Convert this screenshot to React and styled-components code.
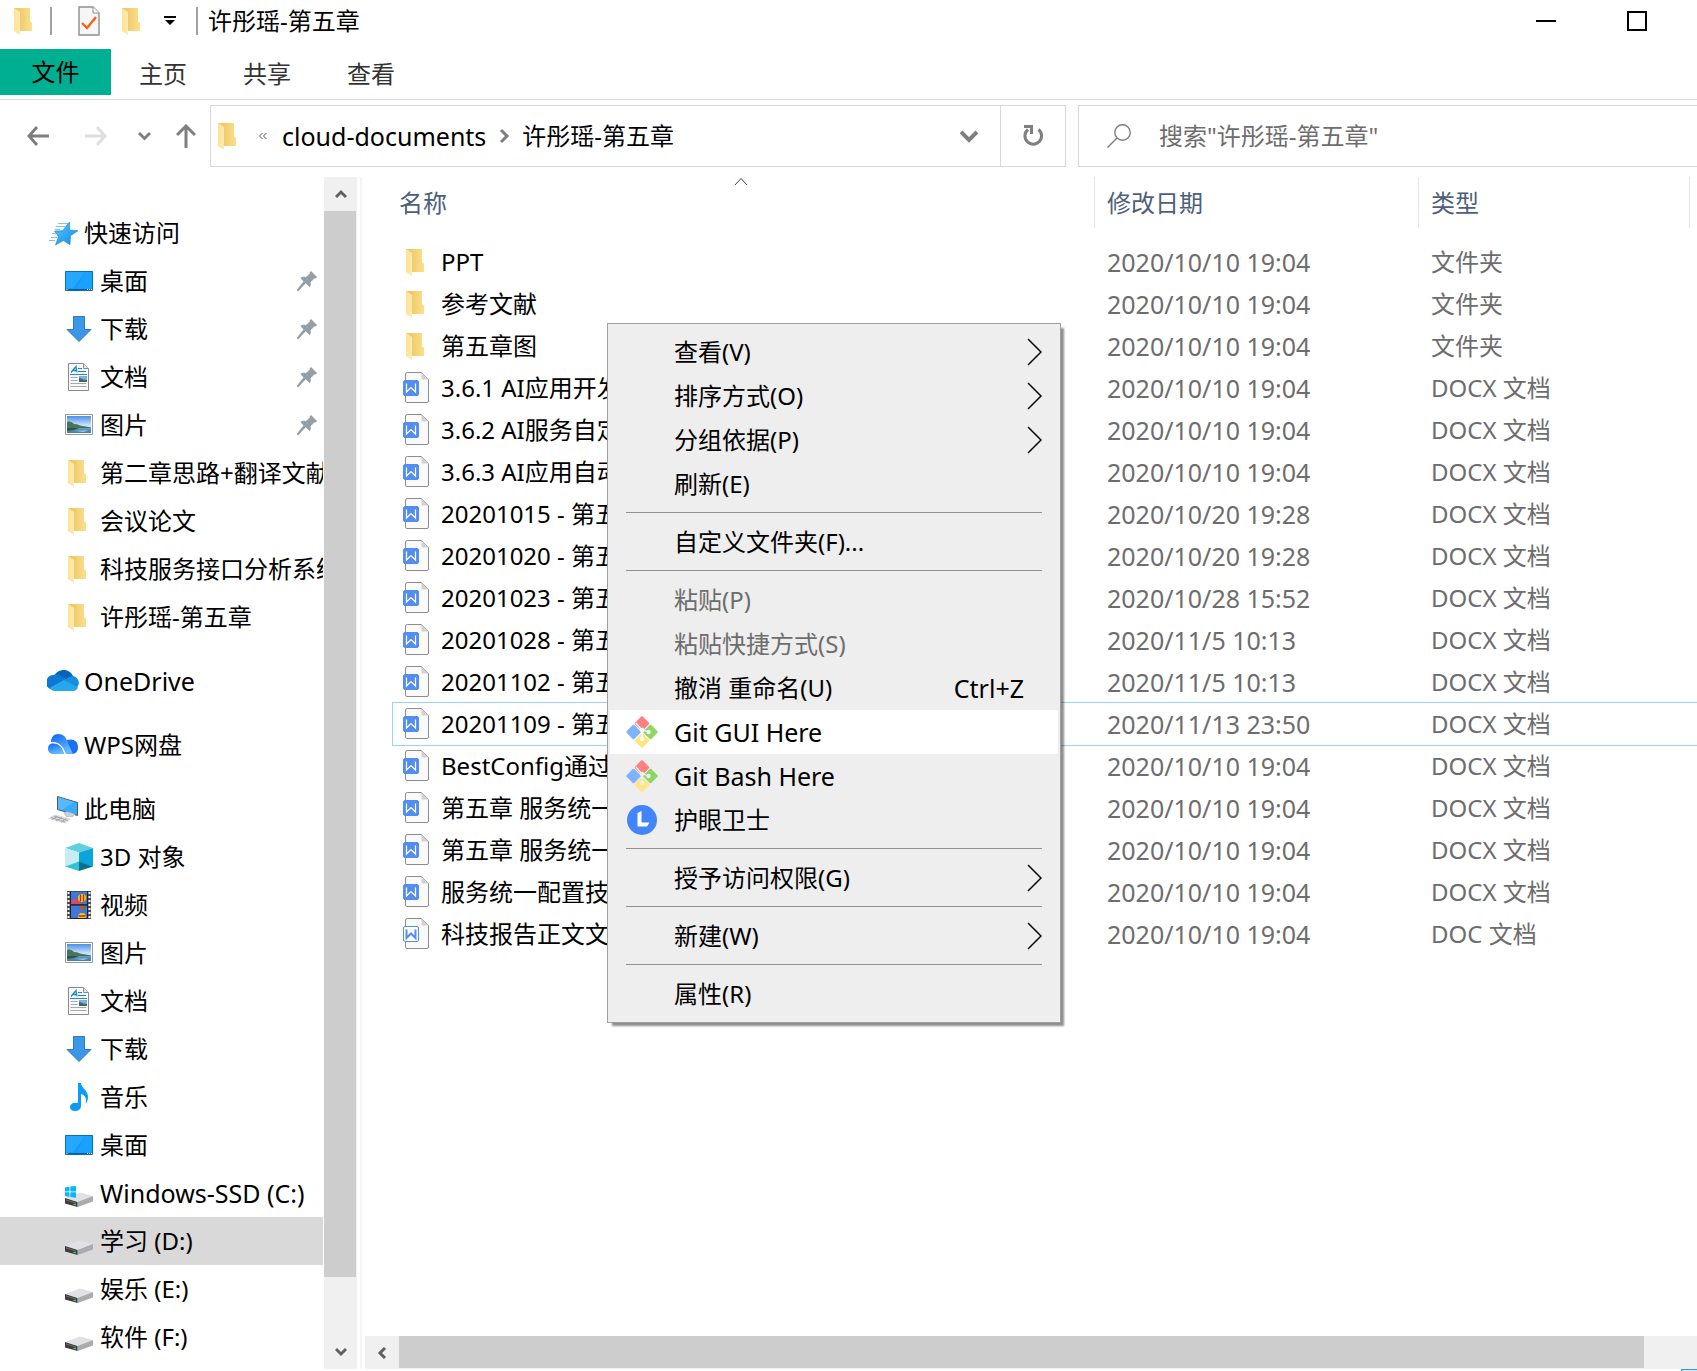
import React, { useState } from "react";
import styled, { createGlobalStyle } from "styled-components";

const GlobalStyle = createGlobalStyle`
    * {
        box-sizing: border-box;
    }

    body {
        margin: 0;
        background: #fff;
        overflow: hidden;
    }

    body, button, input {
        font-family: "Noto Sans", "Noto Sans CJK SC", sans-serif;
        font-size: 24px;
        line-height: 32px;
        color: #000;
    }

    button {
        padding: 0;
        border: 0;
        background: none;
        text-align: left;
    }

    svg {
        display: block;
        flex: none;
    }
`;

const Window = styled.div`
    display: flex;
    flex-direction: column;
    height: 100vh;
    overflow: hidden;
`;

/* ---------- title bar ---------- */

const TitleBar = styled.header`
    display: flex;
    align-items: center;
    height: 42px;
    padding: 0 15px 0 11px;
    flex: none;
`;

const Divider = styled.span`
    width: 2px;
    height: 28px;
    margin-left: 11px;
    background: #a0a0a0;
`;

const QuickTools = styled.div`
    display: flex;
    margin-left: 15px;
`;

const ToolButton = styled.button`
    display: flex;
    align-items: center;
    justify-content: center;
    width: ${(props) => props.$width}px;
`;

const Title = styled.h1`
    flex: 1;
    margin: 0 0 0 10px;
    font-size: 24px;
    font-weight: 400;
    line-height: 32px;
    white-space: nowrap;
`;

/* ---------- ribbon ---------- */

const Ribbon = styled.nav`
    display: flex;
    flex: none;
    height: 51px;
    margin-top: 7px;
    border-bottom: 1px solid #dadbdc;
`;

const FileTab = styled.button`
    width: 111px;
    height: 46px;
    background: #00af91;
    text-align: center;
`;

const Tab = styled.button`
    width: 104px;
    color: #333;
    text-align: center;
`;

/* ---------- address row ---------- */

const Toolbar = styled.div`
    display: grid;
    grid-template-columns: repeat(4, auto) 34fr 25fr;
    flex: none;
    padding: 5px 0 10px 9px;
`;

const AddressBar = styled.div`
    display: flex;
    height: 62px;
    margin-left: 2px;
    border: 1px solid #d9d9d9;
    padding-left: 4px;
    align-items: center;
`;

const Crumb = styled.button`
    font-size: ${(props) => (props.$latin ? 25 : 24)}px;
    white-space: nowrap;
`;

const DropButton = styled(ToolButton)`
    margin-left: auto;
    height: 100%;
`;

const RefreshButton = styled(ToolButton)`
    height: 100%;
    border-left: 1px solid #d9d9d9;
`;

const SearchBox = styled.label`
    display: flex;
    align-items: center;
    gap: 28px;
    height: 62px;
    margin-left: 12px;
    padding-left: 28px;
    border: 1px solid #d9d9d9;
    border-right: 0;

    input {
        flex: 1;
        min-width: 0;
        padding: 0;
        border: 0;
        outline: 0;
        background: none;
    }

    input::placeholder {
        color: #6d6d6d;
        opacity: 1;
    }
`;

/* ---------- body ---------- */

const Body = styled.div`
    display: flex;
    flex: 1;
    min-height: 0;
`;

const Sidebar = styled.aside`
    display: flex;
    flex: none;
    width: 362px;
    padding-right: 3px;
    border-right: 2px solid #f5f5f5;
`;

const Tree = styled.nav`
    display: flex;
    flex-direction: column;
    gap: 16px;
    flex: 1;
    min-width: 0;
    padding: 32px 1px 0 0;
    overflow: hidden;
`;

const TreeItem = styled.a`
    display: flex;
    align-items: center;
    gap: ${(props) => (props.$root ? 5 : 7)}px;
    height: 48px;
    padding-left: ${(props) => (props.$root ? 47 : 65)}px;
    background: ${(props) => (props.$selected ? "#d9d9d9" : "transparent")};
    color: #000;
    font-size: ${(props) => (props.$latin ? 25 : 24)}px;
    text-decoration: none;
    white-space: nowrap;
    overflow: hidden;
`;

const PinSlot = styled.span`
    margin-left: auto;
    padding-right: 6px;
`;

const VerticalScroll = styled.div`
    display: flex;
    flex-direction: column;
    width: 33px;
    background: #f0f0f0;
`;

const HorizontalScroll = styled.div`
    display: flex;
    height: 33px;
    margin: auto 0 0 3px;
    background: #f0f0f0;
`;

const ScrollButton = styled.button`
    display: flex;
    align-items: center;
    justify-content: center;
    flex: 0 0 34px;
`;

const Thumb = styled.div`
    flex: 1;
    background: #cdcdcd;
    margin: ${(props) => (props.$vertical ? "0 1px 58px 0" : "0 53px 1px 0")};
`;

const Content = styled.main`
    position: relative;
    display: flex;
    flex-direction: column;
    flex: 1;
    min-width: 0;
`;

const FileTable = styled.table`
    table-layout: fixed;
    width: calc(100% - 31px);
    margin-left: 31px;
    border-collapse: collapse;

    th, td {
        padding: 0;
        text-align: left;
        font-weight: 400;
        white-space: nowrap;
        overflow: hidden;
    }

    th {
        padding-bottom: 13px;
        overflow: visible;
    }

    td {
        height: 42px;
        padding-left: 12px;
        color: #6d6d6d;
    }

    td:first-child {
        padding-left: 10px;
    }

    time {
        font-size: 25px;
    }
`;

const HeadCell = styled.div`
    position: relative;
    display: flex;
    align-items: center;
    height: 51px;
    margin-left: ${(props) => (props.$first ? -6 : 0)}px;
    padding-left: 12px;
    border-right: 1px solid #e5e5e5;
    color: #4c607a;
`;

const SortMark = styled.span`
    position: absolute;
    top: 0;
    left: 50%;
    transform: translateX(-50%);
`;

const FileRow = styled.tr`
    outline: ${(props) => (props.$focused ? "1px solid #99d1ff" : "none")};
`;

const FileName = styled.div`
    display: flex;
    align-items: center;
    gap: 10px;
    color: #000;
`;

/* ---------- context menu ---------- */

const Menu = styled.div`
    position: absolute;
    top: 146px;
    left: 245px;
    width: 454px;
    padding: 6px 2px;
    border: 1px solid #a0a0a0;
    background: #eee;
    box-shadow: 4px 4px 2px -1px rgba(0, 0, 0, 0.45);
`;

const MenuItem = styled.button`
    display: flex;
    align-items: center;
    width: 100%;
    height: 44px;
    padding: 0 16px;
    background: ${(props) => (props.$active ? "#fff" : "none")};
    color: ${(props) => (props.disabled ? "#6d6d6d" : "#000")};
    font-size: ${(props) => (props.$latin ? 25 : 24)}px;
`;

const MenuIcon = styled.span`
    width: 32px;
    margin-right: 16px;
`;

const Shortcut = styled.span`
    margin-left: auto;
    padding-right: 18px;
    font-size: 25px;
`;

const Submenu = styled.span`
    margin-left: auto;
`;

const MenuLine = styled.hr`
    height: 1px;
    margin: 6px 16px 7px;
    border: 0;
    background: #919191;
`;

const StatusBar = styled.footer`
    display: flex;
    flex: none;
    justify-content: flex-end;
    height: 2px;
    overflow: hidden;
`;

const ViewToggle = styled.button`
    width: 16px;
    height: 16px;
    border: 1px solid #2c9cd8;
    border-right: 0;
    background: #cfe9f8;
`;

/* ---------- icons ---------- */

const FolderIcon = () => (
    <svg width="28" height="28" viewBox="0 0 28 28">
        <defs>
            <linearGradient id="folderBack" x1="0" x2="1">
                <stop offset="0.2" stopColor="#eec769" />
                <stop offset="1" stopColor="#fce08a" />
            </linearGradient>
            <linearGradient id="folderFront" x1="0" x2="1">
                <stop offset="0" stopColor="#ffe294" />
                <stop offset="1" stopColor="#ffebae" />
            </linearGradient>
        </defs>
        <path d="M3 1h16v13l2 2v8H6z" fill="url(#folderBack)" />
        <path d="M3 1l6 4v23l-6-4z" fill="url(#folderFront)" />
    </svg>
);

const CheckDocIcon = () => (
    <svg width="22" height="30" viewBox="0 0 22 30">
        <path d="M1 1h14l6 6v22H1z" fill="#f6f6f8" stroke="#8f8f8f" strokeWidth="1.4" />
        <path d="M15 1v6h6" fill="#fff" stroke="#8f8f8f" />
        <path d="M4 17l5 5 9-11" fill="none" stroke="#f7630c" strokeWidth="2.4" />
    </svg>
);

const StarIcon = () => (
    <svg width="32" height="32" viewBox="0 0 32 32">
        <defs>
            <linearGradient id="star" x1="0" y1="0" x2="1" y2="1">
                <stop offset="0" stopColor="#5cc4ff" />
                <stop offset="1" stopColor="#0d8ee8" />
            </linearGradient>
        </defs>
        <path d="M11 6.500h10M9 9.500h9M8 12.500h5M5 16.500h6M4 20.500h6M2 23.500h6" stroke="#7cc6ee" strokeWidth="1" />
        <path d="M22.500 5v8l8.500.7-7.500 5-.5 9-6.500-4.200L8.500 28l3-8.500-4-5.500 8-.2z" fill="url(#star)" stroke="#1583c8" strokeWidth=".6" />
    </svg>
);

const DesktopIcon = () => (
    <svg width="28" height="28" viewBox="0 0 28 28">
        <path d="M.5 4.500h27v19H.5z" fill="#0e9bfb" stroke="#0b6fb8" />
        <path d="M1 5h19L8 21.500H1z" fill="#27a6ff" />
        <path d="M20 5h7v16.500H12z" fill="#1aa0ff" />
        <path d="M1 22.500h26" stroke="#075a9b" />
        <path d="M1.500 22.500h1M22 22.500h1M24 22.500h1M26 22.500h1" stroke="#fff" />
    </svg>
);

const DownloadIcon = () => (
    <svg width="28" height="28" viewBox="0 0 28 28">
        <path d="M8.500 1.500h11v13h6.500L14 26.500 2 14.500h6.500z" fill="#3c97e8" stroke="#2b7cc7" />
    </svg>
);

const DocumentIcon = () => (
    <svg width="28" height="28" viewBox="0 0 28 28">
        <path d="M3.500.5h15l5 5v22h-20z" fill="#fafafa" stroke="#8a8a8a" />
        <path d="M18.500.5v5h5" fill="#e8e8e8" stroke="#8a8a8a" />
        <path d="M6 9.500L11 3.500l1 6M8 7.500h4" fill="none" stroke="#1787cc" strokeWidth="1.300" />
        <path d="M13 5.500h4M13 8.500h8M5 11.500h17" stroke="#1b8ad0" strokeWidth="1.200" />
        <path d="M5.500 14.500h7M5.500 17.500h7M5.500 20.500h16M5.500 23.500h16" stroke="#a8a8a8" />
        <path d="M14 13h8v6h-8z" fill="#7fb0dc" />
        <path d="M14 14.500l4 2 4 .5v2h-8z" fill="#3f6b59" />
    </svg>
);

const PictureIcon = () => (
    <svg width="28" height="28" viewBox="0 0 28 28">
        <defs>
            <linearGradient id="sky" x1="0" y1="0" x2="0" y2="1">
                <stop offset="0" stopColor="#4d8fe6" />
                <stop offset="0.6" stopColor="#d8ebfa" />
                <stop offset="0.75" stopColor="#5d93bd" />
                <stop offset="1" stopColor="#3f7eb5" />
            </linearGradient>
        </defs>
        <path d="M.5 3.500h27v20H.5z" fill="#fff" stroke="#9a9a9a" />
        <path d="M2 5h24v17H2z" fill="url(#sky)" />
        <path d="M2 11c3-1 5 0 7 2 4 0 6 2 9 2l8 1.500v.5H2z" fill="#47745a" />
        <path d="M2 17h12l-5 2-7 1z" fill="#30563f" />
        <path d="M9 20l14-1-4 2z" fill="#9cc4de" />
    </svg>
);

const OneDriveIcon = () => (
    <svg width="32" height="32" viewBox="0 0 32 32">
        <path d="M7 11c2-4 6-6 10-6s7 2.500 9 6l-8 5z" fill="#0364b8" />
        <path d="M3 24a7.500 7.500 0 0 1 4-14c3-1 5 0 7 1l9 5-12 9z" fill="#0f78d4" />
        <path d="M26 11a7 7 0 0 1 5.500 9l-2 3-13-8 4-2c2-1.500 4-2 5.500-2z" fill="#1490df" />
        <path d="M2.500 23L17 15l14 7.500c-1 2.500-3 3.500-5 3.500H8c-2.500 0-4-1-5.500-3z" fill="#28a8ea" />
    </svg>
);

const WpsCloudIcon = () => (
    <svg width="32" height="32" viewBox="0 0 32 32">
        <defs>
            <linearGradient id="wps" x1="0" y1="0" x2="0.5" y2="1">
                <stop offset="0" stopColor="#0b63f6" />
                <stop offset="1" stopColor="#64bcff" />
            </linearGradient>
        </defs>
        <path d="M20 11c6-2 11 1 11 7 0 4-2 7-6 7h-4z" fill="#1d6ef2" />
        <path d="M4 13c0-5 3-8 7-8 5 0 8 3 9 7l6 13h-7c-2-5-5-12-15-12z" fill="url(#wps)" />
        <path d="M4 14.500c7-1 11 3 13.500 10.500H7c-4 0-6-2-6-5.500 0-2 1-4 3-5z" fill="url(#wps)" />
        <path d="M3.500 14c8-1.500 12 3 14.500 11" fill="none" stroke="#fff" />
    </svg>
);

const ComputerIcon = () => (
    <svg width="32" height="32" viewBox="0 0 32 32">
        <path d="M10.500 3.500l20 6v13l-20-6z" fill="#37adff" stroke="#4c5a66" />
        <path d="M11 4l16 5-12 8-4-1z" fill="#6cc3ff" opacity=".6" />
        <path d="M17 20l3-1.500 8 2.500-2 2.500h-7z" fill="#cdd2d6" stroke="#9ea4a9" strokeWidth=".5" />
        <path d="M8 21.500l16 4.500-6 4.500L1 25.500z" fill="#d7dadd" />
        <path d="M7 23l14 4.500M4 24.500l14 4.500M11 23l-6 3.500M15 24.500l-6 3.500M19 25.500l-5 4" stroke="#989ea3" strokeWidth=".8" />
    </svg>
);

const CubeIcon = () => (
    <svg width="28" height="28" viewBox="0 0 28 28">
        <path d="M14 0l14 5-14 4.500L0 5z" fill="#5fd0dd" />
        <path d="M0 5l14 4.500V19L0 23.500z" fill="#c4eef0" />
        <path d="M28 5L14 9.500V19l14 4.500z" fill="#0ca4dc" />
        <path d="M0 23.500L14 18.500V28z" fill="#35c3d3" />
        <path d="M28 23.500L14 18.500V28z" fill="#04708d" />
    </svg>
);

const VideoIcon = () => (
    <svg width="28" height="28" viewBox="0 0 28 28">
        <path d="M2 0h24v28H2z" fill="#4c4c4c" />
        <path d="M3.500 1v27M24.500 1v27" stroke="#fff" strokeWidth="2" strokeDasharray="2 2" />
        <path d="M5.500 1h17v12h-17zM5.500 14.500h17v13h-17z" fill="#3f78dc" />
        <path d="M6 10l4-2 4 1 3 3.500H6z" fill="#ef4458" />
        <circle cx="17" cy="7" r="4" fill="#f4c90c" />
        <path d="M15.500 3.500v7M18.500 3.500v7" stroke="#c22818" strokeWidth="1.300" />
        <path d="M14 14.500h8l-2 3h-5z" fill="#2a8a47" />
        <path d="M15 15h4l-1 4h-2z" fill="#e84432" />
        <circle cx="17" cy="26" r="4" fill="#f4c90c" />
        <path d="M13.500 25h7" stroke="#c22818" strokeWidth="1.500" />
        <path d="M5 13.800h18M5 27.700h18" stroke="#222" strokeWidth="1.200" />
        <path d="M5.500 0v28M22.500 0v28" stroke="#222" />
    </svg>
);

const MusicIcon = () => (
    <svg width="28" height="28" viewBox="0 0 28 28">
        <path d="M13 0h3c0 5 7 7 7 14 0 3-1 5-2.500 7 1.500-6-.5-9-4.500-10v12c0 3-3 5-6 5s-5-1.500-5-4 3-5 8-4z" fill="#0c9bf5" />
    </svg>
);

const DriveIcon = ({ windows }) => (
    <svg width="28" height="28" viewBox="0 0 28 28">
        <path d="M0 19l15-5.500 13 3.500-15 6z" fill="#e0e1e4" />
        <path d="M28 17v5.500L12.500 28v-5z" fill="#a9abae" />
        <path d="M0 19l12.500 4v5L0 24.500z" fill="#3c3c3c" />
        <path d="M1 20.500l10 3v1l-10-3z" fill="#6d6d6d" />
        <path d="M8.500 25.500h2.500" stroke="#3edc4a" strokeWidth="1.300" />
        {windows && (
            <path d="M0 8.500l4.500-.8v4.800H0zM5.300 7.600L11 7v5.500H5.300zM0 13.300h4.500v4.600L0 17zM5.300 13.300H11v5.400l-5.700-.8z" fill="#05b8f5" />
        )}
    </svg>
);

const PinIcon = () => (
    <svg width="20" height="20" viewBox="0 0 20 20">
        <path d="M14 0l6 6-1.500 1.500-1-.3-4 4c.8 2 .3 3.500-.8 5l-4-4L1.500 20H0v-1.500L6.500 10.500 3.500 7c1.500-1.300 3.500-1.500 5.200-.8l4.300-3.700-.5-1z" fill="#949fa8" />
    </svg>
);

const WordIcon = ({ legacy }) => (
    <svg width="28" height="32" viewBox="0 0 28 32">
        <path d="M4.500.5h14l7 7v21.500q0 1.500-1.500 1.500H4q-1.500 0-1.500-1.500V2q0-1.500 2-1.500z" fill="#fafafa" stroke="#8d8d8d" />
        <path d="M18.500.5v7h7z" fill="#d2d2d2" />
        <rect x=".5" y="8.500" width="15" height="15" rx="1.500" fill={legacy ? "#fff" : "#548df0"} stroke="#548df0" />
        <path
            d="M3.500 11.500v8.500l4.500-4.500 4.500 4.500v-8.500"
            fill="none"
            stroke={legacy ? "#548df0" : "#fff"}
            strokeWidth={legacy ? 2 : 1.2}
        />
    </svg>
);

const GitIcon = () => (
    <svg width="32" height="32" viewBox="0 0 32 32">
        <mask id="branch">
            <path d="M0 0h32v32H0z" fill="#fff" />
            <g fill="none" stroke="#000" strokeWidth="1.300">
                <path d="M10 7l6 7v9M16 13.500l6 2.500" />
            </g>
            <circle cx="16" cy="14" r="2.200" />
            <circle cx="22.500" cy="16" r="2.200" />
            <circle cx="16" cy="23" r="2.200" />
        </mask>
        <g mask="url(#branch)">
            <g transform="rotate(45 16 16)">
                <rect x="4.500" y="4.500" width="11" height="11" rx="1.200" fill="#ff8080" />
                <rect x="16.500" y="4.500" width="11" height="11" rx="1.200" fill="#8ed765" />
                <rect x="4.500" y="16.500" width="11" height="11" rx="1.200" fill="#80b3ff" />
                <rect x="16.500" y="16.500" width="11" height="11" rx="1.200" fill="#ffe680" />
            </g>
        </g>
    </svg>
);

const EyeGuardIcon = () => (
    <svg width="32" height="32" viewBox="0 0 32 32">
        <circle cx="16" cy="16" r="15" fill="#4285fb" />
        <path d="M11.500 9l4-2v11.500h8L21 22.500h-9.500z" fill="#fff" />
    </svg>
);

const RefreshIcon = () => (
    <svg width="22" height="22" viewBox="0 0 22 22">
        <path d="M6 4.500A8.300 8.300 0 1 0 16.500 4.500" fill="none" stroke="#7f7f7f" strokeWidth="3" />
        <path d="M2 0h9v9H8V3H2z" fill="#7f7f7f" />
    </svg>
);

const SearchIcon = () => (
    <svg width="24" height="24" viewBox="0 0 24 24" fill="none" stroke="#7f7f7f" strokeWidth="1.400">
        <circle cx="15.500" cy="8.500" r="7.700" />
        <path d="M10 14L.5 23.500" />
    </svg>
);

// open stroke shape, used for all arrows and chevrons
const Stroke = ({ w, h, d, color = "#7f7f7f", weight = 3 }) => (
    <svg width={w} height={h} viewBox={`0 0 ${w} ${h}`} fill="none" stroke={color} strokeWidth={weight}>
        <path d={d} />
    </svg>
);

/* ---------- data ---------- */

const tabs = ["主页", "共享", "查看"];

const tree = [
    [
        { label: "快速访问", icon: <StarIcon />, root: true },
        { label: "桌面", icon: <DesktopIcon />, pinned: true },
        { label: "下载", icon: <DownloadIcon />, pinned: true },
        { label: "文档", icon: <DocumentIcon />, pinned: true },
        { label: "图片", icon: <PictureIcon />, pinned: true },
        { label: "第二章思路+翻译文献", icon: <FolderIcon /> },
        { label: "会议论文", icon: <FolderIcon /> },
        { label: "科技服务接口分析系统", icon: <FolderIcon /> },
        { label: "许彤瑶-第五章", icon: <FolderIcon /> },
    ],
    [{ label: "OneDrive", icon: <OneDriveIcon />, root: true, latin: true }],
    [{ label: "WPS网盘", icon: <WpsCloudIcon />, root: true }],
    [
        { label: "此电脑", icon: <ComputerIcon />, root: true },
        { label: "3D 对象", icon: <CubeIcon /> },
        { label: "视频", icon: <VideoIcon /> },
        { label: "图片", icon: <PictureIcon /> },
        { label: "文档", icon: <DocumentIcon /> },
        { label: "下载", icon: <DownloadIcon /> },
        { label: "音乐", icon: <MusicIcon /> },
        { label: "桌面", icon: <DesktopIcon /> },
        { label: "Windows-SSD (C:)", icon: <DriveIcon windows />, latin: true },
        { label: "学习 (D:)", icon: <DriveIcon />, selected: true },
        { label: "娱乐 (E:)", icon: <DriveIcon /> },
        { label: "软件 (F:)", icon: <DriveIcon /> },
    ],
];

const files = [
    { name: "PPT", date: "2020/10/10 19:04", type: "文件夹" },
    { name: "参考文献", date: "2020/10/10 19:04", type: "文件夹" },
    { name: "第五章图", date: "2020/10/10 19:04", type: "文件夹" },
    { name: "3.6.1 AI应用开发", date: "2020/10/10 19:04", type: "DOCX 文档" },
    { name: "3.6.2 AI服务自定", date: "2020/10/10 19:04", type: "DOCX 文档" },
    { name: "3.6.3 AI应用自动", date: "2020/10/10 19:04", type: "DOCX 文档" },
    { name: "20201015 - 第五章", date: "2020/10/20 19:28", type: "DOCX 文档" },
    { name: "20201020 - 第五章", date: "2020/10/20 19:28", type: "DOCX 文档" },
    { name: "20201023 - 第五章", date: "2020/10/28 15:52", type: "DOCX 文档" },
    { name: "20201028 - 第五章", date: "2020/11/5 10:13", type: "DOCX 文档" },
    { name: "20201102 - 第五章", date: "2020/11/5 10:13", type: "DOCX 文档" },
    { name: "20201109 - 第五章", date: "2020/11/13 23:50", type: "DOCX 文档", focused: true },
    { name: "BestConfig通过", date: "2020/10/10 19:04", type: "DOCX 文档" },
    { name: "第五章 服务统一", date: "2020/10/10 19:04", type: "DOCX 文档" },
    { name: "第五章 服务统一", date: "2020/10/10 19:04", type: "DOCX 文档" },
    { name: "服务统一配置技", date: "2020/10/10 19:04", type: "DOCX 文档" },
    { name: "科技报告正文文", date: "2020/10/10 19:04", type: "DOC 文档" },
];

const menu = [
    [
        { label: "查看(V)", submenu: true },
        { label: "排序方式(O)", submenu: true },
        { label: "分组依据(P)", submenu: true },
        { label: "刷新(E)" },
    ],
    [{ label: "自定义文件夹(F)..." }],
    [
        { label: "粘贴(P)", disabled: true },
        { label: "粘贴快捷方式(S)", disabled: true },
        { label: "撤消 重命名(U)", shortcut: "Ctrl+Z" },
        { label: "Git GUI Here", icon: <GitIcon />, active: true, latin: true },
        { label: "Git Bash Here", icon: <GitIcon />, latin: true },
        { label: "护眼卫士", icon: <EyeGuardIcon /> },
    ],
    [{ label: "授予访问权限(G)", submenu: true }],
    [{ label: "新建(W)", submenu: true }],
    [{ label: "属性(R)" }],
];

const fileIcon = (type) => {
    if (type === "文件夹") return <FolderIcon />;
    return <WordIcon legacy={type === "DOC 文档"} />;
};

/* ---------- parts ---------- */

const Header = () => (
    <TitleBar>
        <FolderIcon />
        <Divider />
        <QuickTools>
            <ToolButton $width={44} aria-label="属性"><CheckDocIcon /></ToolButton>
            <ToolButton $width={44} aria-label="新建文件夹"><FolderIcon /></ToolButton>
            <ToolButton $width={30} aria-label="自定义快速访问工具栏">
                <svg width="12" height="10" viewBox="0 0 12 10">
                    <path d="M0 0h12v2H0zM1 4h10L6 9z" />
                </svg>
            </ToolButton>
        </QuickTools>
        <Divider />
        <Title>许彤瑶-第五章</Title>
        <ToolButton $width={91} aria-label="最小化">
            <Stroke w={20} h={20} d="M0 10h20" color="#000" weight={2} />
        </ToolButton>
        <ToolButton $width={91} aria-label="最大化">
            <Stroke w={20} h={20} d="M1 1h18v18H1z" color="#000" weight={2} />
        </ToolButton>
    </TitleBar>
);

const NavigationRow = () => {
    const [query, setQuery] = useState("");

    return (
        <Toolbar>
            <ToolButton $width={58} aria-label="后退">
                <Stroke w={22} h={20} d="M10 1L2 10l8 9M2 10h20" />
            </ToolButton>
            <ToolButton $width={58} aria-label="前进">
                <Stroke w={22} h={20} d="M12 1l8 9-8 9M20 10H0" color="#dedede" />
            </ToolButton>
            <ToolButton $width={38} aria-label="最近浏览的位置">
                <Stroke w={13} h={10} d="M1 2l5.500 5.500L12 2" />
            </ToolButton>
            <ToolButton $width={45} aria-label="上移">
                <Stroke w={20} h={24} d="M1 11l9-9 9 9M10 2v22" />
            </ToolButton>
            <AddressBar>
                <FolderIcon />
                <ToolButton $width={39} aria-label="上级">
                    <Stroke w={10} h={8} d="M4.500 1l-3 3 3 3M8.500 1l-3 3 3 3" weight={1} color="#555" />
                </ToolButton>
                <Crumb $latin>cloud-documents</Crumb>
                <ToolButton $width={36} aria-label="展开">
                    <Stroke w={11} h={16} d="M2 2l6 6-6 6" />
                </ToolButton>
                <Crumb>许彤瑶-第五章</Crumb>
                <DropButton $width={62} aria-label="以前的位置">
                    <Stroke w={18} h={13} d="M1 2l8 8 8-8" weight={4} />
                </DropButton>
                <RefreshButton $width={65} aria-label="刷新"><RefreshIcon /></RefreshButton>
            </AddressBar>
            <SearchBox>
                <SearchIcon />
                <input
                    type="text"
                    aria-label="搜索"
                    placeholder={'搜索"许彤瑶-第五章"'}
                    value={query}
                    onChange={(e) => setQuery(e.target.value)}
                />
            </SearchBox>
        </Toolbar>
    );
};

const FolderTree = () => (
    <Sidebar>
        <Tree>
            {tree.map((group, index) => (
                <div key={index}>
                    {group.map((item) => (
                        <TreeItem
                            key={item.label}
                            href="#"
                            $root={item.root}
                            $latin={item.latin}
                            $selected={item.selected}
                        >
                            {item.icon}
                            {item.label}
                            {item.pinned && <PinSlot><PinIcon /></PinSlot>}
                        </TreeItem>
                    ))}
                </div>
            ))}
        </Tree>
        <VerticalScroll>
            <ScrollButton aria-label="向上滚动">
                <Stroke w={12} h={10} d="M1 8l5-5 5 5" color="#606060" />
            </ScrollButton>
            <Thumb $vertical />
            <ScrollButton aria-label="向下滚动">
                <Stroke w={12} h={10} d="M1 2l5 5 5-5" color="#606060" />
            </ScrollButton>
        </VerticalScroll>
    </Sidebar>
);

const FileList = () => (
    <FileTable>
        <colgroup>
            <col />
            <col style={{ width: 324 }} />
            <col style={{ width: 271 }} />
            <col style={{ width: 7 }} />
        </colgroup>
        <thead>
            <tr>
                <th>
                    <HeadCell $first>
                        名称
                        <SortMark>
                            <Stroke w={14} h={9} d="M1 8l6-6.500L13 8" color="#444" weight={1} />
                        </SortMark>
                    </HeadCell>
                </th>
                <th><HeadCell>修改日期</HeadCell></th>
                <th><HeadCell>类型</HeadCell></th>
                <th aria-label="大小" />
            </tr>
        </thead>
        <tbody>
            {files.map((file, index) => (
                <FileRow key={index} $focused={file.focused}>
                    <td>
                        <FileName>
                            {fileIcon(file.type)}
                            {file.name}
                        </FileName>
                    </td>
                    <td><time>{file.date}</time></td>
                    <td>{file.type}</td>
                    <td />
                </FileRow>
            ))}
        </tbody>
    </FileTable>
);

const ContextMenu = () => (
    <Menu>
        {menu.map((group, index) => (
            <React.Fragment key={index}>
                {index > 0 && <MenuLine />}
                {group.map((item) => (
                    <MenuItem
                        key={item.label}
                        disabled={item.disabled}
                        $active={item.active}
                        $latin={item.latin}
                    >
                        <MenuIcon>{item.icon}</MenuIcon>
                        {item.label}
                        {item.shortcut && <Shortcut>{item.shortcut}</Shortcut>}
                        {item.submenu && (
                            <Submenu>
                                <Stroke w={15} h={28} d="M1 1l13 13L1 27" color="#000" weight={1.5} />
                            </Submenu>
                        )}
                    </MenuItem>
                ))}
            </React.Fragment>
        ))}
    </Menu>
);

function App() {
    return (
        <Window>
            <GlobalStyle />
            <Header />
            <Ribbon>
                <FileTab>文件</FileTab>
                {tabs.map((tab) => (
                    <Tab key={tab}>{tab}</Tab>
                ))}
            </Ribbon>
            <NavigationRow />
            <Body>
                <FolderTree />
                <Content>
                    <FileList />
                    <HorizontalScroll>
                        <ScrollButton aria-label="向左滚动">
                            <Stroke w={10} h={12} d="M8 1L3 6l5 5" color="#606060" />
                        </ScrollButton>
                        <Thumb />
                    </HorizontalScroll>
                    <ContextMenu />
                </Content>
            </Body>
            <StatusBar>
                <ViewToggle aria-label="详细信息" />
            </StatusBar>
        </Window>
    );
}

export default App;
